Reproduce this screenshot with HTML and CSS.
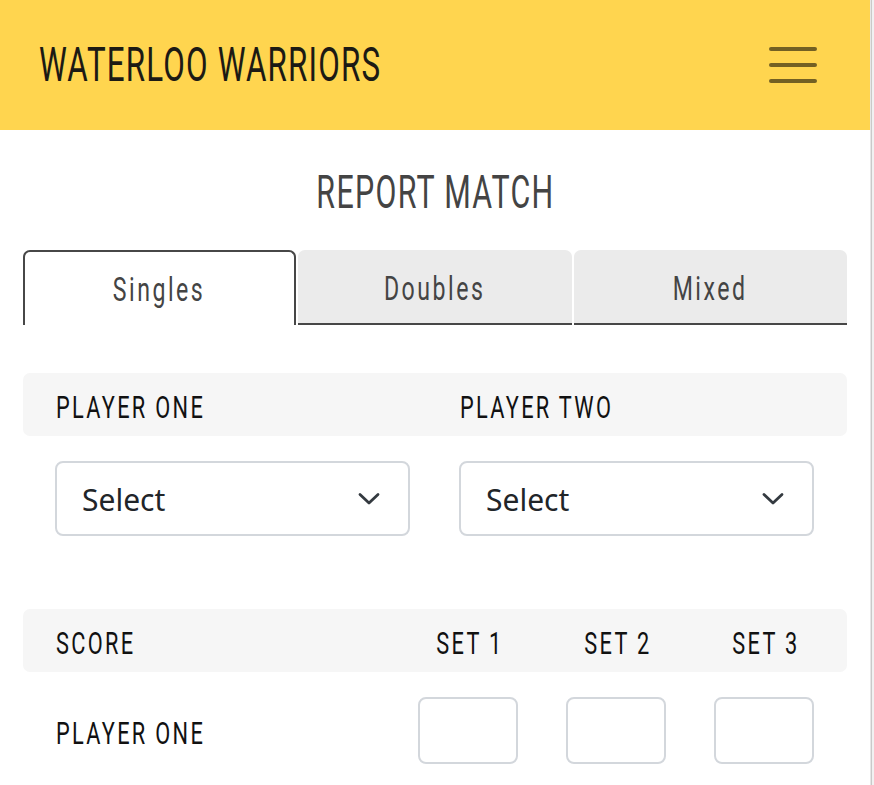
FILE: index.html
```html
<!DOCTYPE html>
<html lang="en">
<head>
<meta charset="utf-8">
<title>Waterloo Warriors - Report Match</title>
<link rel="stylesheet" href="styles.css">
</head>
<body>
<div class="page">
  <div class="app">
    <header class="topbar">
      <span class="brand">WATERLOO WARRIORS</span>
      <button class="toggler" aria-label="Menu">
        <span class="bar"></span><span class="bar"></span><span class="bar"></span>
      </button>
    </header>
    <main class="content">
      <h1 class="title"><span class="title-text">REPORT MATCH</span></h1>
      <nav class="tabs">
        <div class="tab active"><span class="tab-text">Singles</span></div>
        <div class="tab"><span class="tab-text">Doubles</span></div>
        <div class="tab"><span class="tab-text">Mixed</span></div>
      </nav>

      <div class="band players-band">
        <span class="cell"><span class="label">PLAYER ONE</span></span>
        <span class="cell"><span class="label">PLAYER TWO</span></span>
      </div>
      <div class="players-row">
        <div class="select"><span>Select</span>
          <svg class="chev" width="22" height="14" viewBox="0 0 22 14"><path d="M2 2.5 L11 11 L20 2.5" fill="none" stroke="#343a40" stroke-width="2.8" stroke-linecap="round" stroke-linejoin="round"/></svg>
        </div>
        <div class="select"><span>Select</span>
          <svg class="chev" width="22" height="14" viewBox="0 0 22 14"><path d="M2 2.5 L11 11 L20 2.5" fill="none" stroke="#343a40" stroke-width="2.8" stroke-linecap="round" stroke-linejoin="round"/></svg>
        </div>
      </div>

      <div class="band score-band">
        <span class="cell"><span class="label">SCORE</span></span>
        <span class="cell center"><span class="label mid">SET 1</span></span>
        <span class="cell center"><span class="label mid">SET 2</span></span>
        <span class="cell center"><span class="label mid">SET 3</span></span>
      </div>
      <div class="score-row">
        <span class="cell"><span class="label">PLAYER ONE</span></span>
        <div class="box"></div>
        <div class="box"></div>
        <div class="box"></div>
      </div>
    </main>
  </div>
  <div class="scrollbar"></div>
</div>
</body>
</html>
```

FILE: styles.css
```css
html, body {
  margin: 0;
  padding: 0;
  background: #ffffff;
  overflow: hidden;
}

.page {
  display: flex;
  width: 874px;
  height: 785px;
}

.app {
  width: 870px;
  flex: none;
}

.scrollbar {
  width: 4px;
  flex: none;
  background: linear-gradient(to right, #e6e6e6 0, #e6e6e6 1px, #c9c9c9 1px, #c9c9c9 2px, #f1f1f1 2px);
}

.topbar {
  height: 130px;
  background: #ffd54f;
  display: flex;
  align-items: center;
  justify-content: space-between;
  padding: 0 53px 0 39px;
  box-sizing: border-box;
}

.brand {
  display: inline-block;
  font-family: Roboto, "DejaVu Sans Condensed", sans-serif;
  font-size: 49px;
  line-height: 1;
  letter-spacing: 1.8px;
  color: #1c1a14;
  transform: scaleX(0.64);
  transform-origin: left center;
  margin-top: -2px;
  white-space: nowrap;
}

.toggler {
  background: none;
  border: 0;
  padding: 0;
  width: 48px;
  display: flex;
  flex-direction: column;
  gap: 12px;
  margin-top: -1px;
}

.bar {
  display: block;
  height: 4px;
  border-radius: 2px;
  background: rgba(0, 0, 0, 0.55);
}

.content {
  padding: 0 23px;
}

.title {
  margin: 0;
  padding-top: 38px;
  height: 82px;
  box-sizing: border-box;
  text-align: center;
  font-weight: normal;
}

.title-text {
  display: inline-block;
  font-family: Roboto, "DejaVu Sans Condensed", sans-serif;
  font-size: 46px;
  line-height: 48px;
  letter-spacing: 2px;
  color: #444444;
  transform: scaleX(0.66);
  transform-origin: center;
  white-space: nowrap;
}

.tabs {
  margin-top: 38px;
  display: grid;
  grid-template-columns: 273px 274px 273px;
  column-gap: 2px;
  height: 75px;
}

.tab {
  background: #ebebeb;
  border-radius: 7px 7px 0 0;
  border-bottom: 2px solid #474747;
  display: flex;
  align-items: center;
  justify-content: center;
  padding-top: 2px;
}

.tab.active {
  background: #ffffff;
  border: 2px solid #474747;
  border-bottom: 0;
  padding-bottom: 2px;
}

.tab-text {
  display: inline-block;
  font-family: Roboto, "DejaVu Sans Condensed", sans-serif;
  font-size: 34px;
  line-height: 40px;
  letter-spacing: 3.7px;
  color: #444444;
  transform: scaleX(0.68);
  transform-origin: center;
  white-space: nowrap;
}

.band {
  background: #f6f6f6;
  border-radius: 7px;
  height: 63px;
  box-sizing: border-box;
  display: grid;
  align-items: center;
  padding: 0 33px;
}

.cell {
  display: block;
  white-space: nowrap;
}

.cell.center {
  text-align: center;
}

.label {
  display: inline-block;
  font-family: Roboto, "DejaVu Sans Condensed", sans-serif;
  font-size: 32px;
  line-height: 36px;
  letter-spacing: 3.4px;
  color: #111111;
  transform: scaleX(0.68);
  transform-origin: left center;
  padding-top: 4px;
}

.label.mid {
  transform-origin: center;
  padding-left: 3px;
}

.players-band {
  margin-top: 48px;
  grid-template-columns: 355px 355px;
  column-gap: 49px;
}

.players-row {
  margin-top: 25px;
  padding: 0 32px;
  display: grid;
  grid-template-columns: 355px 355px;
  column-gap: 49px;
}

.select {
  height: 75px;
  box-sizing: border-box;
  border: 2px solid #d3d7dc;
  border-radius: 8px;
  display: flex;
  align-items: center;
  justify-content: space-between;
  padding: 2px 28px 0 25px;
  font-family: "Noto Sans", "Open Sans", sans-serif;
  font-size: 30px;
  color: #212529;
}

.chev {
  display: block;
  margin-top: -2px;
}

.score-band {
  margin-top: 73px;
  grid-template-columns: 1fr 100px 100px 100px;
  column-gap: 48px;
}

.score-row {
  margin-top: 25px;
  padding: 0 33px;
  display: grid;
  grid-template-columns: 1fr 100px 100px 100px;
  column-gap: 48px;
  align-items: center;
}

.box {
  height: 67px;
  box-sizing: border-box;
  border: 2px solid #d3d7dc;
  border-radius: 8px;
}
```
